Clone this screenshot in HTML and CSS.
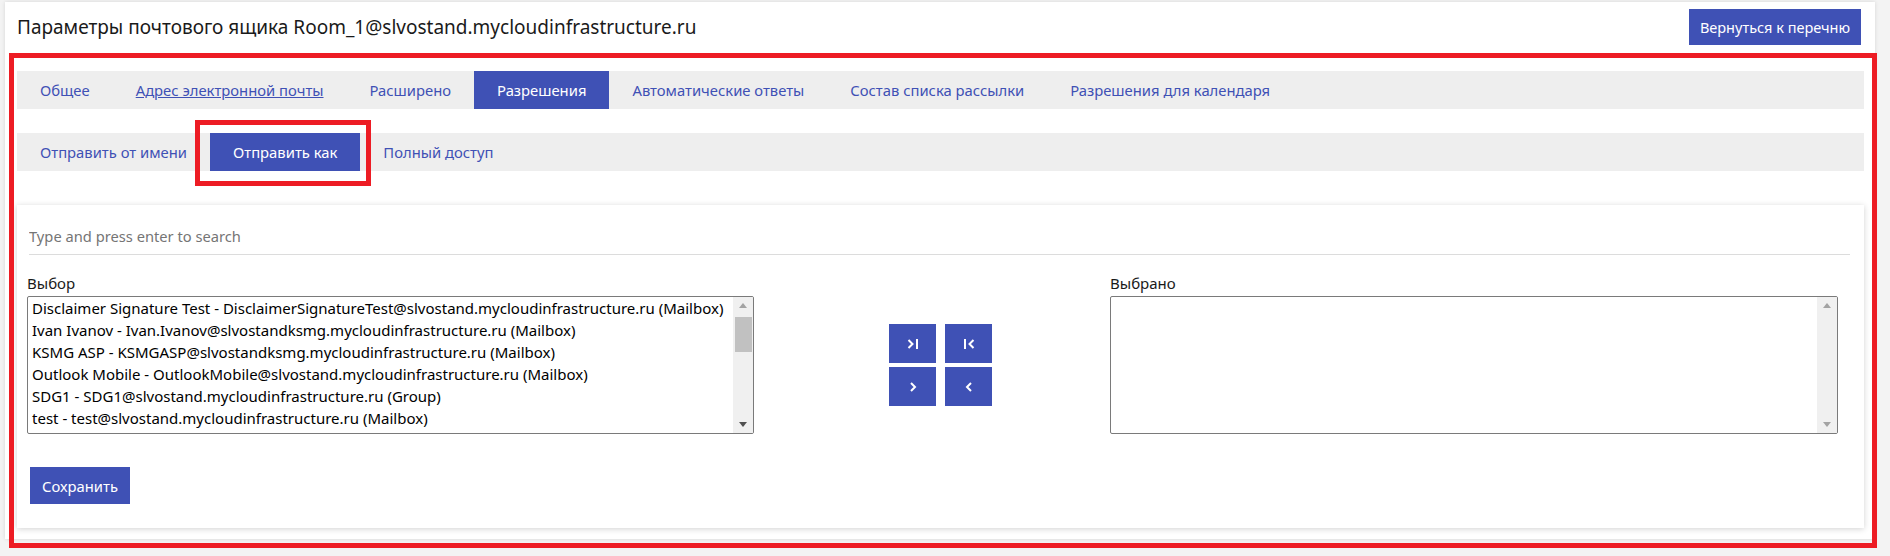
FILE: index.html
```html
<html lang="ru">
<head>
    <meta charset="UTF-8">
    <meta name="viewport" content="width=device-width, initial-scale=1.0">
    <title>Параметры почтового ящика</title>
    <link rel="stylesheet" href="styles.css">
</head>
<body>
    <div class="panel">
        <div class="panel-head">
            <h1>Параметры почтового ящика Room_1@slvostand.mycloudinfrastructure.ru</h1>
            <button class="btn back-btn">Вернуться к перечню</button>
        </div>

        <nav class="tabs">
            <a class="tab">Общее</a>
            <a class="tab tab-hover">Адрес электронной почты</a>
            <a class="tab">Расширено</a>
            <a class="tab active">Разрешения</a>
            <a class="tab">Автоматические ответы</a>
            <a class="tab">Состав списка рассылки</a>
            <a class="tab">Разрешения для календаря</a>
        </nav>

        <nav class="tabs subtabs">
            <a class="tab">Отправить от имени</a>
            <a class="tab active">Отправить как</a>
            <a class="tab">Полный доступ</a>
        </nav>

        <div class="card">
            <input class="search" type="text" placeholder="Type and press enter to search">

            <div class="picker">
                <div class="picker-col">
                    <label class="picker-label">Выбор</label>
                    <div class="listbox">
                        <div class="listbox-items">
                            <div class="option">Disclaimer Signature Test - DisclaimerSignatureTest@slvostand.mycloudinfrastructure.ru (Mailbox)</div>
                            <div class="option">Ivan Ivanov - Ivan.Ivanov@slvostandksmg.mycloudinfrastructure.ru (Mailbox)</div>
                            <div class="option">KSMG ASP - KSMGASP@slvostandksmg.mycloudinfrastructure.ru (Mailbox)</div>
                            <div class="option">Outlook Mobile - OutlookMobile@slvostand.mycloudinfrastructure.ru (Mailbox)</div>
                            <div class="option">SDG1 - SDG1@slvostand.mycloudinfrastructure.ru (Group)</div>
                            <div class="option">test - test@slvostand.mycloudinfrastructure.ru (Mailbox)</div>
                        </div>
                        <div class="scrollbar">
                            <span class="sb-btn"><i class="arrow-up"></i></span>
                            <span class="sb-thumb"></span>
                            <span class="sb-btn sb-bottom"><i class="arrow-down dark"></i></span>
                        </div>
                    </div>
                </div>

                <div class="mover">
                    <button class="btn move-btn" title="Добавить все">
                        <svg width="12" height="12" viewBox="0 0 12 12"><polyline points="1.5,2 5.5,6 1.5,10" /><line x1="10" y1="1" x2="10" y2="11" /></svg>
                    </button>
                    <button class="btn move-btn" title="Убрать все">
                        <svg width="12" height="12" viewBox="0 0 12 12"><line x1="2" y1="1" x2="2" y2="11" /><polyline points="10.5,2 6.5,6 10.5,10" /></svg>
                    </button>
                    <button class="btn move-btn" title="Добавить">
                        <svg width="12" height="12" viewBox="0 0 12 12"><polyline points="4,2 8,6 4,10" /></svg>
                    </button>
                    <button class="btn move-btn" title="Убрать">
                        <svg width="12" height="12" viewBox="0 0 12 12"><polyline points="8,2 4,6 8,10" /></svg>
                    </button>
                </div>

                <div class="picker-col">
                    <label class="picker-label">Выбрано</label>
                    <div class="listbox">
                        <div class="listbox-items"></div>
                        <div class="scrollbar">
                            <span class="sb-btn"><i class="arrow-up"></i></span>
                            <span class="sb-track"></span>
                            <span class="sb-btn sb-bottom"><i class="arrow-down"></i></span>
                        </div>
                    </div>
                </div>
            </div>

            <button class="btn save-btn">Сохранить</button>
        </div>

        <!-- red highlight frames from the original screenshot -->
        <div class="mark mark-main"></div>
        <div class="mark mark-sub"></div>
    </div>
</body>
</html>
```

FILE: styles.css
```css
body {
    margin: 0;
    padding: 2px 15px 0 5px;
    background: #f3f3f3;
    font-family: 'Noto Sans', 'Open Sans', sans-serif;
    color: #212121;
}
.panel {
    position: relative;
    background: #fff;
    box-shadow: 0 0 4px rgba(0, 0, 0, 0.12);
    padding-bottom: 11px;
}
.panel-head {
    display: flex;
    justify-content: space-between;
    align-items: center;
    padding: 7px 14px 0 12px;
    height: 36px;
}
.panel-head h1 {
    margin: 0;
    font-size: 19px;
    font-weight: normal;
    color: #1a1a1a;
}
.btn {
    font-family: inherit;
    border: none;
    background: #3f51b5;
    color: #fff;
    cursor: pointer;
    font-size: 14.8px;
}
.btn:hover { opacity: 0.9; }
.back-btn { height: 36px; width: 172px; padding: 0; font-size: 14.5px; }

.tabs {
    display: flex;
    margin: 26px 11px 0 12px;
    height: 38px;
    background: #eeeeee;
}
.subtabs { margin-top: 24px; }
.tab {
    padding: 0 23px;
    line-height: 38px;
    font-size: 14.8px;
    color: #3f51b5;
    cursor: pointer;
    white-space: nowrap;
}
.tab-hover { text-decoration: underline; }
.tab.active { background: #3f51b5; color: #fff; }

.card {
    margin: 34px 11px 0 12px;
    padding: 13px 14px 24px 10px;
    background: #fff;
    box-shadow: 0 1px 6px rgba(0, 0, 0, 0.18);
}
.search {
    display: block;
    width: calc(100% - 2px);
    box-sizing: border-box;
    margin-left: 2px;
    height: 37px;
    padding: 0;
    border: none;
    border-bottom: 1px solid #dcdcdc;
    font-family: inherit;
    font-size: 14.7px;
    outline: none;
}
.search::placeholder { color: #757575; }

.picker {
    display: grid;
    grid-template-columns: 727px 1fr 728px;
    margin: 17px 12px 0 0;
}
.picker-label {
    display: block;
    line-height: 22px;
    margin-bottom: 2px;
    font-size: 15px;
    color: #1a1a1a;
}
.listbox {
    display: flex;
    height: 138px;
    box-sizing: border-box;
    border: 1px solid #7a7a7a;
    border-radius: 2px;
    overflow: hidden;
}
.listbox-items {
    flex: 1;
    padding: 0 4px;
    overflow: hidden;
}
.option {
    line-height: 22px;
    font-size: 15px;
    color: #000;
    white-space: nowrap;
}
.scrollbar {
    width: 20px;
    display: flex;
    flex-direction: column;
    background: #f0f0f0;
}
.sb-btn {
    height: 17px;
    display: flex;
    justify-content: center;
    align-items: center;
}
.sb-bottom { margin-top: auto; }
.sb-thumb {
    height: 35px;
    margin: 3px 1px 0 2px;
    background: #c1c1c1;
}
.arrow-up, .arrow-down {
    width: 0;
    height: 0;
    border-left: 4.5px solid transparent;
    border-right: 4.5px solid transparent;
}
.arrow-up { border-bottom: 5px solid #a3a3a3; }
.arrow-down { border-top: 5px solid #a3a3a3; }
.arrow-down.dark { border-top-color: #505050; }

.mover {
    align-self: end;
    height: 138px;
    padding-left: 17px;
    display: grid;
    grid-template-columns: 47px 47px;
    grid-template-rows: 39px 39px;
    column-gap: 9px;
    row-gap: 4px;
    align-content: center;
    justify-content: center;
}
.move-btn {
    display: flex;
    justify-content: center;
    align-items: center;
    padding: 0;
    height: 39px;
}
.move-btn svg { fill: none; stroke: #fff; stroke-width: 2; }

.save-btn {
    display: block;
    margin: 33px 0 0 3px;
    width: 100px;
    height: 37px;
}

.mark {
    position: absolute;
    border: 5px solid #ed1c24;
    box-sizing: border-box;
    pointer-events: none;
}
.mark-main { left: 4px; top: 51px; width: 1868px; height: 495px; }
.mark-sub { left: 190px; top: 118px; width: 176px; height: 66px; }
```
